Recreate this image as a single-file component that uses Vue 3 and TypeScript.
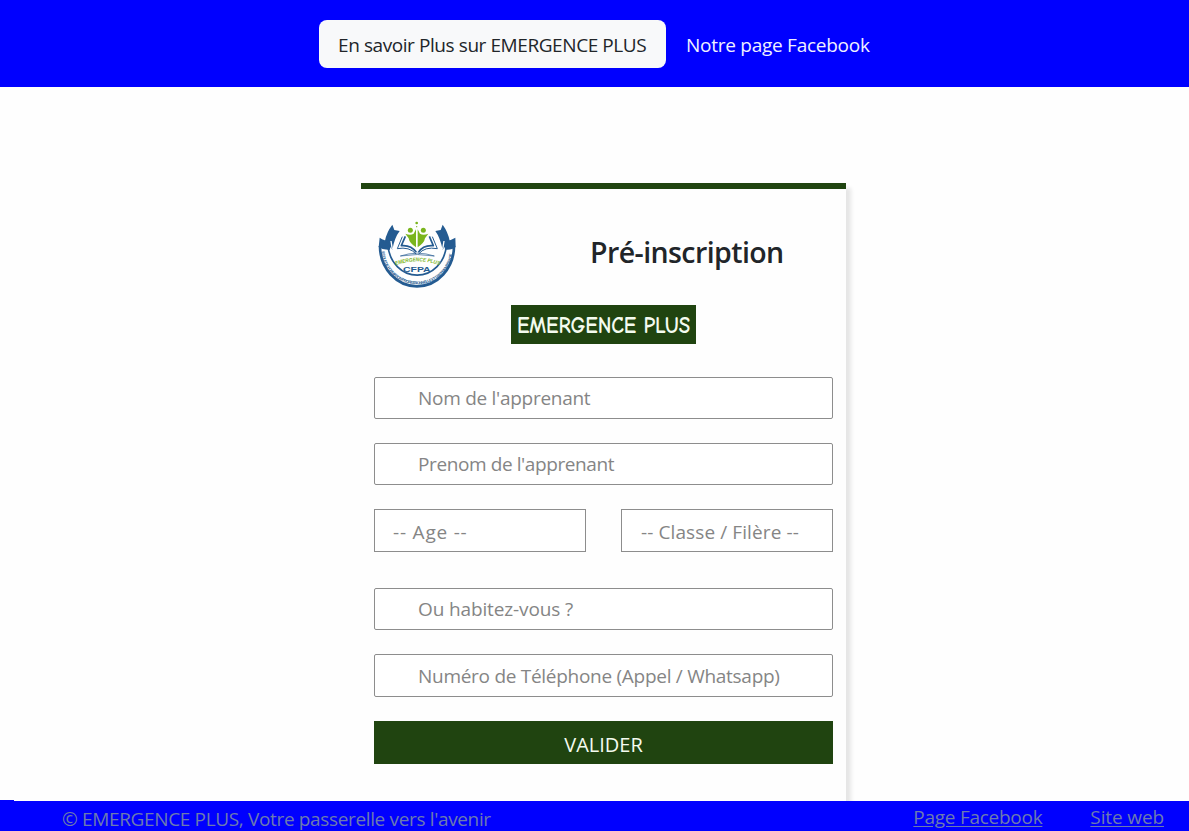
<script setup lang="ts">
interface Field {
  id: string
  placeholder: string
}

const identity: Field[] = [
  { id: 'nom', placeholder: "Nom de l'apprenant" },
  { id: 'prenom', placeholder: "Prenom de l'apprenant" },
]
const choices: Field[] = [
  { id: 'age', placeholder: '-- Age --' },
  { id: 'classe', placeholder: '-- Classe / Filère --' },
]
const contact: Field[] = [
  { id: 'adresse', placeholder: 'Ou habitez-vous ?' },
  { id: 'telephone', placeholder: 'Numéro de Téléphone (Appel / Whatsapp)' },
]
</script>

<template>
  <div class="page">
    <header class="topbar">
      <a class="about"><span>En savoir Plus sur EMERGENCE PLUS</span></a>
      <a class="fb"><span>Notre page Facebook</span></a>
    </header>

    <main class="content">
      <form class="card" @submit.prevent>
        <div class="heading">
          <svg class="logo" viewBox="0 0 300 270" aria-hidden="true">
            <defs>
              <path id="ring" d="M35 117A106 105 0 0 0 248 117" />
              <path id="arch" d="M77 166Q142 142 210 166" />
            </defs>
            <g fill="none" stroke="#245b91">
              <path d="M30 108A111 121 0 0 0 252 108" stroke-width="8" />
              <path d="M54 108A88 98 0 0 0 229 108" stroke-width="5" />
            </g>
            <g fill="#245b91">
              <path d="M29 83Q43 93 62 94L60 119Q39 121 26 111ZM256 83Q241 93 223 94L225 119Q246 121 257 111Z" />
              <path d="M67 44L73 60L89 63Q74 82 67 119L45 92Q50 66 67 44ZM218 44L212 60L196 63Q210 82 218 119L239 92Q234 66 218 44Z" />
            </g>
            <path d="M63 93L67 118M222 93L218 118" stroke="#fff" stroke-width="4" />
            <g fill="none" stroke="#245b91" stroke-linejoin="round">
              <path d="M97 80L82 116Q118 109 138 132M187 80L202 116Q164 109 146 132" stroke-width="3" />
              <path d="M106 79L94 107Q123 104 139 127M178 79L190 107Q160 104 145 127" stroke-width="5" />
              <path d="M91 138Q142 121 193 138Q142 129 91 138Z" stroke-width="2" />
            </g>
            <g fill="#7ab51d">
              <circle cx="121" cy="61" r="7.5" />
              <circle cx="160" cy="61" r="7.5" />
              <path d="M106 71Q121 77 131 71L138 58V112Q118 99 116 85ZM175 71Q160 77 150 71L143 58V112Q163 99 165 85Z" />
              <circle cx="140" cy="39" r="4" />
              <circle cx="140" cy="50" r="2" />
            </g>
            <text class="arch-text"><textPath href="#arch" textLength="134" lengthAdjust="spacingAndGlyphs">EMERGENCE PLUS</textPath></text>
            <text class="cfpa" x="99" y="186" textLength="83" lengthAdjust="spacingAndGlyphs">CFPA</text>
            <text class="ring-text"><textPath href="#ring" textLength="310" startOffset="8">ECOLE DE FORMATION PROFESSIONNELLE ET D'APPRENTISSAGE</textPath></text>
          </svg>
          <h1>Pré-inscription</h1>
        </div>
        <div class="brand"><span>EMERGENCE PLUS</span></div>

        <input v-for="f in identity" :key="f.id" :class="['field', f.id]" :placeholder="f.placeholder" />
        <div class="pair">
          <input v-for="f in choices" :key="f.id" :class="['field', 'choice', f.id]" :placeholder="f.placeholder" />
        </div>
        <input v-for="f in contact" :key="f.id" :class="['field', f.id]" :placeholder="f.placeholder" />
        <button class="submit" type="submit">VALIDER</button>
      </form>
    </main>

    <footer class="footer">
      <span class="copy">© EMERGENCE PLUS, Votre passerelle vers l'avenir</span>
      <nav>
        <a class="l1">Page Facebook</a>
        <a class="l2">Site web</a>
      </nav>
    </footer>
  </div>
</template>

<style>
body {
  margin: 0;
  background: #fefefe;
}
</style>

<style scoped>
.page,
.page * {
  box-sizing: border-box;
}
.page {
  height: 831px;
  display: flex;
  flex-direction: column;
  overflow: hidden;
  font-family: "Segoe UI", "Open Sans", sans-serif;
  font-size: 19px;
  color: #212529;
}
.topbar {
  flex: none;
  height: 87px;
  background: #00f;
  display: flex;
  align-items: flex-start;
  padding: 20px 0 0 319px;
}
.topbar a {
  height: 48px;
  line-height: 50px;
  white-space: nowrap;
}
.about {
  width: 347px;
  padding-left: 19px;
  border-radius: 8px;
  background: #f8f9fa;
  letter-spacing: -0.42px;
}
.fb {
  margin-left: 20px;
  color: #f0f0ff;
  letter-spacing: -0.26px;
}
.content {
  flex: 1;
  min-height: 0;
  overflow: hidden;
  padding: 96px 0 0 361px;
}
.card {
  width: 485px;
  height: 700px;
  border-top: 6px solid #204410;
  padding: 21px 13px 0;
  background: #fefefe;
  box-shadow: 5px 5px 4px #e6e6e6;
  display: flex;
  flex-direction: column;
}
.heading {
  height: 95px;
  flex: none;
  display: flex;
  margin-left: -4px;
}
.logo {
  width: 100px;
  height: 90px;
  flex: none;
}
.arch-text {
  font: italic 700 16px "Liberation Sans", sans-serif;
  fill: #7ab51d;
}
.cfpa {
  font: 700 21px "Liberation Sans", sans-serif;
  fill: #245b91;
}
.ring-text {
  font: 700 12px "Liberation Sans", sans-serif;
  fill: #245b91;
}
h1 {
  margin: 21px 0 0 120px;
  font-size: 28.5px;
  line-height: 42px;
  font-weight: 600;
  letter-spacing: -0.57px;
  white-space: nowrap;
}
.brand {
  flex: none;
  align-self: center;
  width: 185px;
  height: 39px;
  margin-bottom: 33px;
  background: #204410;
  color: #f4fbef;
  font: 600 21px/40px "Comic Sans MS", "Comic Neue", Lato, sans-serif;
  letter-spacing: -0.1px;
  text-align: center;
  white-space: nowrap;
}
.brand span {
  display: inline-block;
  transform: scaleY(1.1);
}
.field {
  flex: none;
  display: block;
  width: 459px;
  height: 42px;
  margin: 0 0 24px;
  padding: 0 0 0 43px;
  border: 1px solid #8d8d8d;
  border-radius: 2px;
  background: #fff;
  font: inherit;
  outline: none;
}
.field::placeholder {
  color: #858585;
  opacity: 1;
}
.nom,
.telephone {
  letter-spacing: -0.28px;
}
.prenom {
  letter-spacing: -0.4px;
}
.adresse {
  letter-spacing: -0.13px;
}
.pair {
  flex: none;
  display: flex;
  justify-content: space-between;
  margin-bottom: 36px;
}
.choice {
  width: 212px;
  height: 43px;
  margin: 0;
  padding: 2px 0 0 18px;
  border-radius: 0;
}
.age {
  letter-spacing: 0.8px;
}
.classe {
  padding-left: 19px;
  letter-spacing: 0.1px;
}
.telephone {
  height: 43px;
  margin-bottom: 24px;
  padding-top: 1px;
}
.submit {
  flex: none;
  height: 43px;
  padding: 4px 0 0;
  border: 0;
  background: #204410;
  color: #f4fbef;
  font: inherit;
  font-size: 20px;
}
.footer {
  flex: none;
  position: relative;
  height: 30px;
  padding: 0 25px 0 62px;
  background: #00f;
  display: flex;
  justify-content: space-between;
  color: #6c7baf;
  line-height: 36px;
  white-space: nowrap;
}
.footer::before {
  content: "";
  position: absolute;
  left: 0;
  top: -1px;
  width: 14px;
  height: 1px;
  background: #00f;
}
.copy {
  letter-spacing: -0.35px;
}
nav {
  display: flex;
  line-height: 32px;
}
nav a {
  text-decoration: underline;
  text-underline-offset: 2px;
  letter-spacing: -0.27px;
}
.l1 {
  margin-right: 48px;
}
.l2 {
  letter-spacing: -0.12px;
}
</style>
